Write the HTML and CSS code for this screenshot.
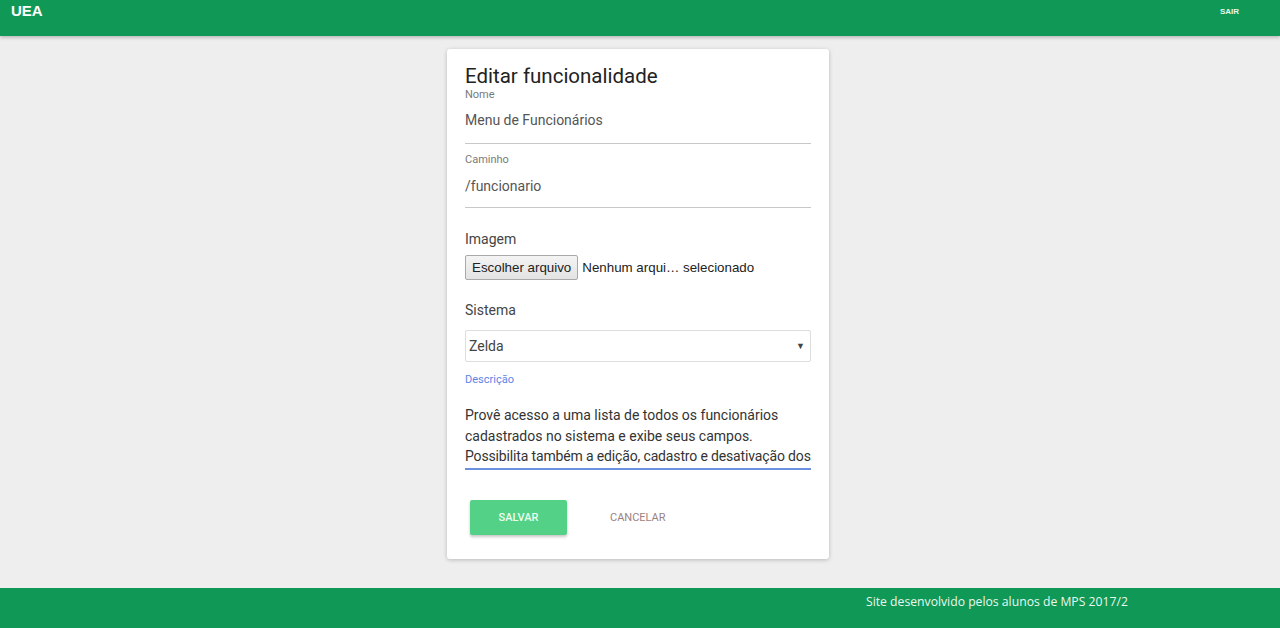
FILE: index.html
```html
<!DOCTYPE html>
<html lang="pt">
<head>
<meta charset="utf-8">
<title>Editar funcionalidade</title>
<link rel="stylesheet" href="styles.css">
</head>
<body>
<header class="topbar">
  <span class="brand">UEA</span>
  <a class="logout" href="#">SAIR</a>
</header>
<main class="content">
  <section class="card">
    <h1 class="title">Editar funcionalidade</h1>
    <div class="field">
      <label class="small-label">Nome</label>
      <div class="line-input">Menu de Funcionários</div>
    </div>
    <div class="field field-path">
      <label class="small-label">Caminho</label>
      <div class="line-input">/funcionario</div>
    </div>
    <div class="block">
      <div class="block-label">Imagem</div>
      <div class="file-row">
        <span class="file-btn">Escolher arquivo</span>
        <span class="file-name">Nenhum arqui… selecionado</span>
      </div>
    </div>
    <div class="block block-system">
      <div class="block-label">Sistema</div>
      <div class="select">
        <span>Zelda</span>
        <span class="caret">▼</span>
      </div>
    </div>
    <div class="field field-desc">
      <label class="small-label active">Descrição</label>
      <div class="textarea">
        <span class="ta-line">Provê acesso a uma lista de todos os funcionários</span>
        <span class="ta-line">cadastrados no sistema e exibe seus campos.</span>
        <span class="ta-line ta-tight">Possibilita também a edição, cadastro e desativação dos</span>
      </div>
    </div>
    <div class="actions">
      <button class="btn-save">SALVAR</button>
      <button class="btn-cancel">CANCELAR</button>
    </div>
  </section>
</main>
<footer class="footer">
  <span class="footer-text">Site desenvolvido pelos alunos de MPS 2017/2</span>
</footer>
</body>
</html>
```

FILE: styles.css
```css
* { box-sizing: border-box; }
html, body { margin: 0; padding: 0; }
body {
  background: #eeeeee;
  font-family: Roboto, "Liberation Sans", Arial, sans-serif;
  height: 628px;
  display: flex;
  flex-direction: column;
}
.topbar {
  height: 36px;
  background: #0f9856;
  display: flex;
  align-items: flex-start;
  justify-content: space-between;
  padding: 0 41px 0 11px;
  box-shadow: 0 2px 3px rgba(0,0,0,0.2);
}
.brand {
  color: #fff;
  font-family: "Liberation Sans", Arial, sans-serif;
  font-weight: bold;
  font-size: 15px;
  line-height: 22px;
  margin-top: 0;
}
.logout {
  color: #e8f6ec;
  text-decoration: none;
  font-family: "Liberation Sans", Arial, sans-serif;
  font-weight: bold;
  font-size: 8px;
  line-height: 12px;
  margin-top: 6px;
}
.content {
  flex: 1;
  display: flex;
  justify-content: center;
  align-items: flex-start;
  padding-top: 13px;
  padding-right: 4px;
}
.card {
  width: 382px;
  background: #fff;
  border-radius: 3px;
  box-shadow: 0 1px 4px rgba(0,0,0,0.22);
  padding: 16px 18px 24px 18px;
}
.title {
  margin: 0;
  font-weight: 400;
  font-size: 20.5px;
  line-height: 23px;
  color: #222;
}
.small-label {
  display: block;
  font-size: 11px;
  line-height: 13px;
  color: #7a7a7a;
}
.small-label.active { color: #5b86e5; }
.line-input {
  font-size: 14px;
  color: #555;
  line-height: 20px;
  padding: 9px 0 13px 0;
  border-bottom: 1px solid #c8c8c8;
}
.field-path { margin-top: 9px; }
.field-path .line-input { padding: 10px 0 11px 0; }
.block { margin-top: 22px; }
.block-label {
  font-size: 14px;
  line-height: 18px;
  color: #444;
}
.file-row {
  margin-top: 7px;
  display: flex;
  align-items: center;
  font-family: "Liberation Sans", Arial, sans-serif;
  font-size: 13.33px;
  color: #222;
}
.file-btn {
  display: inline-block;
  height: 25px;
  line-height: 23px;
  padding: 0 6px;
  border: 1px solid #a9a9a9;
  border-radius: 2px;
  background: linear-gradient(#f4f4f4, #e3e3e3);
  color: #222;
}
.file-name { margin-left: 4px; }
.block-system { margin-top: 21px; }
.select {
  margin-top: 11px;
  height: 32px;
  border: 1px solid #dddddd;
  border-radius: 2px;
  display: flex;
  align-items: center;
  justify-content: space-between;
  padding: 0 5px 0 3px;
  font-size: 14px;
  color: #444;
}
.caret { font-size: 9px; color: #444; }
.field-desc { margin-top: 11px; }
.textarea {
  margin-top: 19px;
  font-size: 14px;
  line-height: 20.5px;
  color: #333;
  padding-bottom: 1px;
  border-bottom: 2px solid #6b90e0;
  overflow: hidden;
}
.ta-line {
  display: block;
  white-space: nowrap;
}
.ta-tight { letter-spacing: -0.15px; }
.actions {
  margin-top: 30px;
  display: flex;
  align-items: center;
  padding-left: 5px;
}
.btn-save {
  width: 97px;
  height: 35px;
  border: none;
  border-radius: 2px;
  background: #52d187;
  color: #eafff0;
  font-family: Roboto, sans-serif;
  font-weight: 500;
  font-size: 11px;
  box-shadow: 0 2px 3px rgba(0,0,0,0.22);
}
.btn-cancel {
  margin-left: 38px;
  border: none;
  background: transparent;
  color: #9b8282;
  font-family: Roboto, sans-serif;
  font-size: 11px;
  padding: 0 5px;
}
.footer {
  height: 40px;
  background: #0f9856;
  display: flex;
  align-items: flex-start;
  padding-left: 866px;
}
.footer-text {
  color: #eaf7ee;
  font-family: "Open Sans", sans-serif;
  font-size: 12.2px;
  line-height: 16px;
  margin-top: 6px;
}
```
